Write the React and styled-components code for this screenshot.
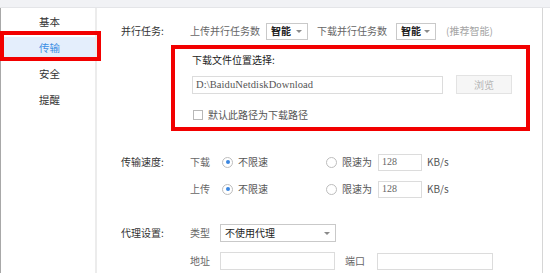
import styled, { createGlobalStyle } from "styled-components";

const Global = createGlobalStyle`
    html, body {
        margin: 0;
        padding: 0;
        background: #fff;
    }
    body {
        font-family: "Noto Sans CJK SC", "Microsoft YaHei", sans-serif;
        font-size: 10px;
        line-height: 14px;
        color: #333;
    }
`;

const Window = styled.div`
    width: 550px;
    height: 273px;
    overflow: hidden;
    display: flex;
    flex-direction: column;
`;

const TopBar = styled.div`
    height: 7px;
    background: #f1f2f5;
    border-bottom: 1px solid #e4e5e8;
    flex-shrink: 0;
`;

const Main = styled.div`
    position: relative;
    flex: 1;
    display: flex;
    border-left: 1px solid #a8a8a8;
`;

const Sidebar = styled.div`
    width: 94px;
    flex-shrink: 0;
    padding-top: 3px;
    display: flex;
    flex-direction: column;
    gap: 4px;
    border-right: 2px solid #ececec;
`;

const NavItem = styled.div`
    height: 22px;
    margin-left: 3px;
    display: flex;
    align-items: center;
    justify-content: center;
    font-size: 10.5px;
    color: ${(p) => (p.active ? "#3d8ee4" : "#333")};
    background: ${(p) => (p.active ? "#e4eefc" : "transparent")};
`;

const Mark = styled.div`
    position: absolute;
    left: -1px;
    top: 23px;
    width: 93px;
    height: 22px;
    border: 4px solid #f20000;
    pointer-events: none;
`;

const Content = styled.div`
    width: 420px;
    flex-shrink: 0;
    padding: 14px 0 0 24px;
    display: flex;
    flex-direction: column;
`;

const Strip = styled.div`
    flex: 1;
    border-left: 1px solid #d6d6d6;
    margin-left: 1px;
`;

const Row = styled.div`
    display: flex;
    align-items: center;
    height: 18px;
    margin-top: ${(p) => p.mt || 0}px;
`;

const Label = styled.div`
    width: 69px;
    flex-shrink: 0;
    color: #333;
`;

const Sub = styled.span`
    color: #666;
    margin-left: ${(p) => p.ml || 0}px;
    margin-right: ${(p) => p.mr || 0}px;
`;

const Hint = styled.span`
    color: #a5a5a5;
    margin-left: 10px;
`;

const Select = styled.div`
    width: ${(p) => p.w}px;
    height: ${(p) => p.h || 17}px;
    box-sizing: border-box;
    border: 1px solid #c9c9c9;
    display: flex;
    align-items: center;
    justify-content: space-between;
    padding: 0 5px 0 4px;
    margin-right: ${(p) => p.mr || 0}px;
    font-weight: ${(p) => (p.bold ? 700 : 400)};
    color: #222;
    background: #fff;
`;

const Caret = styled.span`
    width: 0;
    height: 0;
    border-left: 3px solid transparent;
    border-right: 3px solid transparent;
    border-top: 3px solid #8a8a8a;
`;

const Group = styled.div`
    margin: 5px 0 0 50px;
    width: 334px;
    height: 74px;
    border: 4px solid #f20000;
    padding: 4px 0 0 17px;
    box-sizing: content-box;
    display: flex;
    flex-direction: column;
`;

const GroupTitle = styled.div`
    color: #222;
`;

const PathRow = styled.div`
    display: flex;
    align-items: center;
    margin-top: 8px;
`;

const PathInput = styled.div`
    width: 251px;
    height: 18px;
    box-sizing: border-box;
    border: 1px solid #dcdcdc;
    padding-left: 3px;
    display: flex;
    align-items: center;
    font-family: "Liberation Serif", serif;
    font-size: 10.5px;
    color: #555;
    letter-spacing: 0.1px;
`;

const Button = styled.div`
    margin-left: 13px;
    width: 56px;
    height: 19px;
    box-sizing: border-box;
    border: 1px solid #e3e3e3;
    background: #f6f6f6;
    color: #b5b5b5;
    display: flex;
    align-items: center;
    justify-content: center;
`;

const CheckRow = styled.label`
    display: flex;
    align-items: center;
    margin-top: 14px;
    color: #555;
`;

const Box = styled.span`
    width: 10px;
    height: 10px;
    box-sizing: border-box;
    border: 1px solid #b8b8b8;
    margin: 0 5px 0 1px;
    background: #fff;
`;

const Option = styled.div`
    display: flex;
    align-items: center;
    width: ${(p) => p.w || "auto"};
    color: #555;
`;

const Radio = styled.span`
    width: 11px;
    height: 11px;
    box-sizing: border-box;
    border-radius: 50%;
    border: 1px solid #bdbdbd;
    margin-right: 5px;
    display: flex;
    align-items: center;
    justify-content: center;
    &::after {
        content: "";
        width: 4px;
        height: 4px;
        border-radius: 50%;
        background: ${(p) => (p.on ? "#3a86e0" : "transparent")};
    }
`;

const Field = styled.div`
    width: ${(p) => p.w}px;
    height: ${(p) => p.h || 17}px;
    box-sizing: border-box;
    border: 1px solid #dcdcdc;
    margin-left: ${(p) => p.ml || 0}px;
    padding-left: 3px;
    display: flex;
    align-items: center;
    font-family: "Liberation Serif", serif;
    font-size: 10px;
    color: #666;
`;

const Unit = styled.span`
    color: #555;
    margin-left: 5px;
`;

const SpeedRow = ({ dir, mt }) => (
    <Row mt={mt}>
        <Label>{dir === "下载" ? "传输速度:" : ""}</Label>
        <Sub mr={12}>{dir}</Sub>
        <Option w="104px">
            <Radio on />
            不限速
        </Option>
        <Option>
            <Radio />
            限速为
            <Field w={44} ml={6}>
                128
            </Field>
            <Unit>KB/s</Unit>
        </Option>
    </Row>
);

export default function App() {
    return (
        <Window>
            <Global />
            <TopBar />
            <Main>
                <Sidebar>
                    <NavItem>基本</NavItem>
                    <NavItem active>传输</NavItem>
                    <NavItem>安全</NavItem>
                    <NavItem>提醒</NavItem>
                </Sidebar>
                <Mark />
                <Content>
                    <Row>
                        <Label>并行任务:</Label>
                        <Sub mr={6}>上传并行任务数</Sub>
                        <Select w={42} bold mr={9}>
                            智能
                            <Caret />
                        </Select>
                        <Sub mr={9}>下载并行任务数</Sub>
                        <Select w={40} bold>
                            智能
                            <Caret />
                        </Select>
                        <Hint>(推荐智能)</Hint>
                    </Row>

                    <Group>
                        <GroupTitle>下载文件位置选择:</GroupTitle>
                        <PathRow>
                            <PathInput>D:\BaiduNetdiskDownload</PathInput>
                            <Button>浏览</Button>
                        </PathRow>
                        <CheckRow>
                            <Box />
                            默认此路径为下载路径
                        </CheckRow>
                    </Group>

                    <SpeedRow dir="下载" mt={22} />
                    <SpeedRow dir="上传" mt={9} />

                    <Row mt={26}>
                        <Label>代理设置:</Label>
                        <Sub mr={10}>类型</Sub>
                        <Select w={116} h={18}>
                            不使用代理
                            <Caret />
                        </Select>
                    </Row>
                    <Row mt={10}>
                        <Label />
                        <Sub mr={10}>地址</Sub>
                        <Field w={115} h={18} />
                        <Sub ml={10} mr={12}>
                            端口
                        </Sub>
                        <Field w={116} h={17} />
                    </Row>
                </Content>
                <Strip />
            </Main>
        </Window>
    );
}
